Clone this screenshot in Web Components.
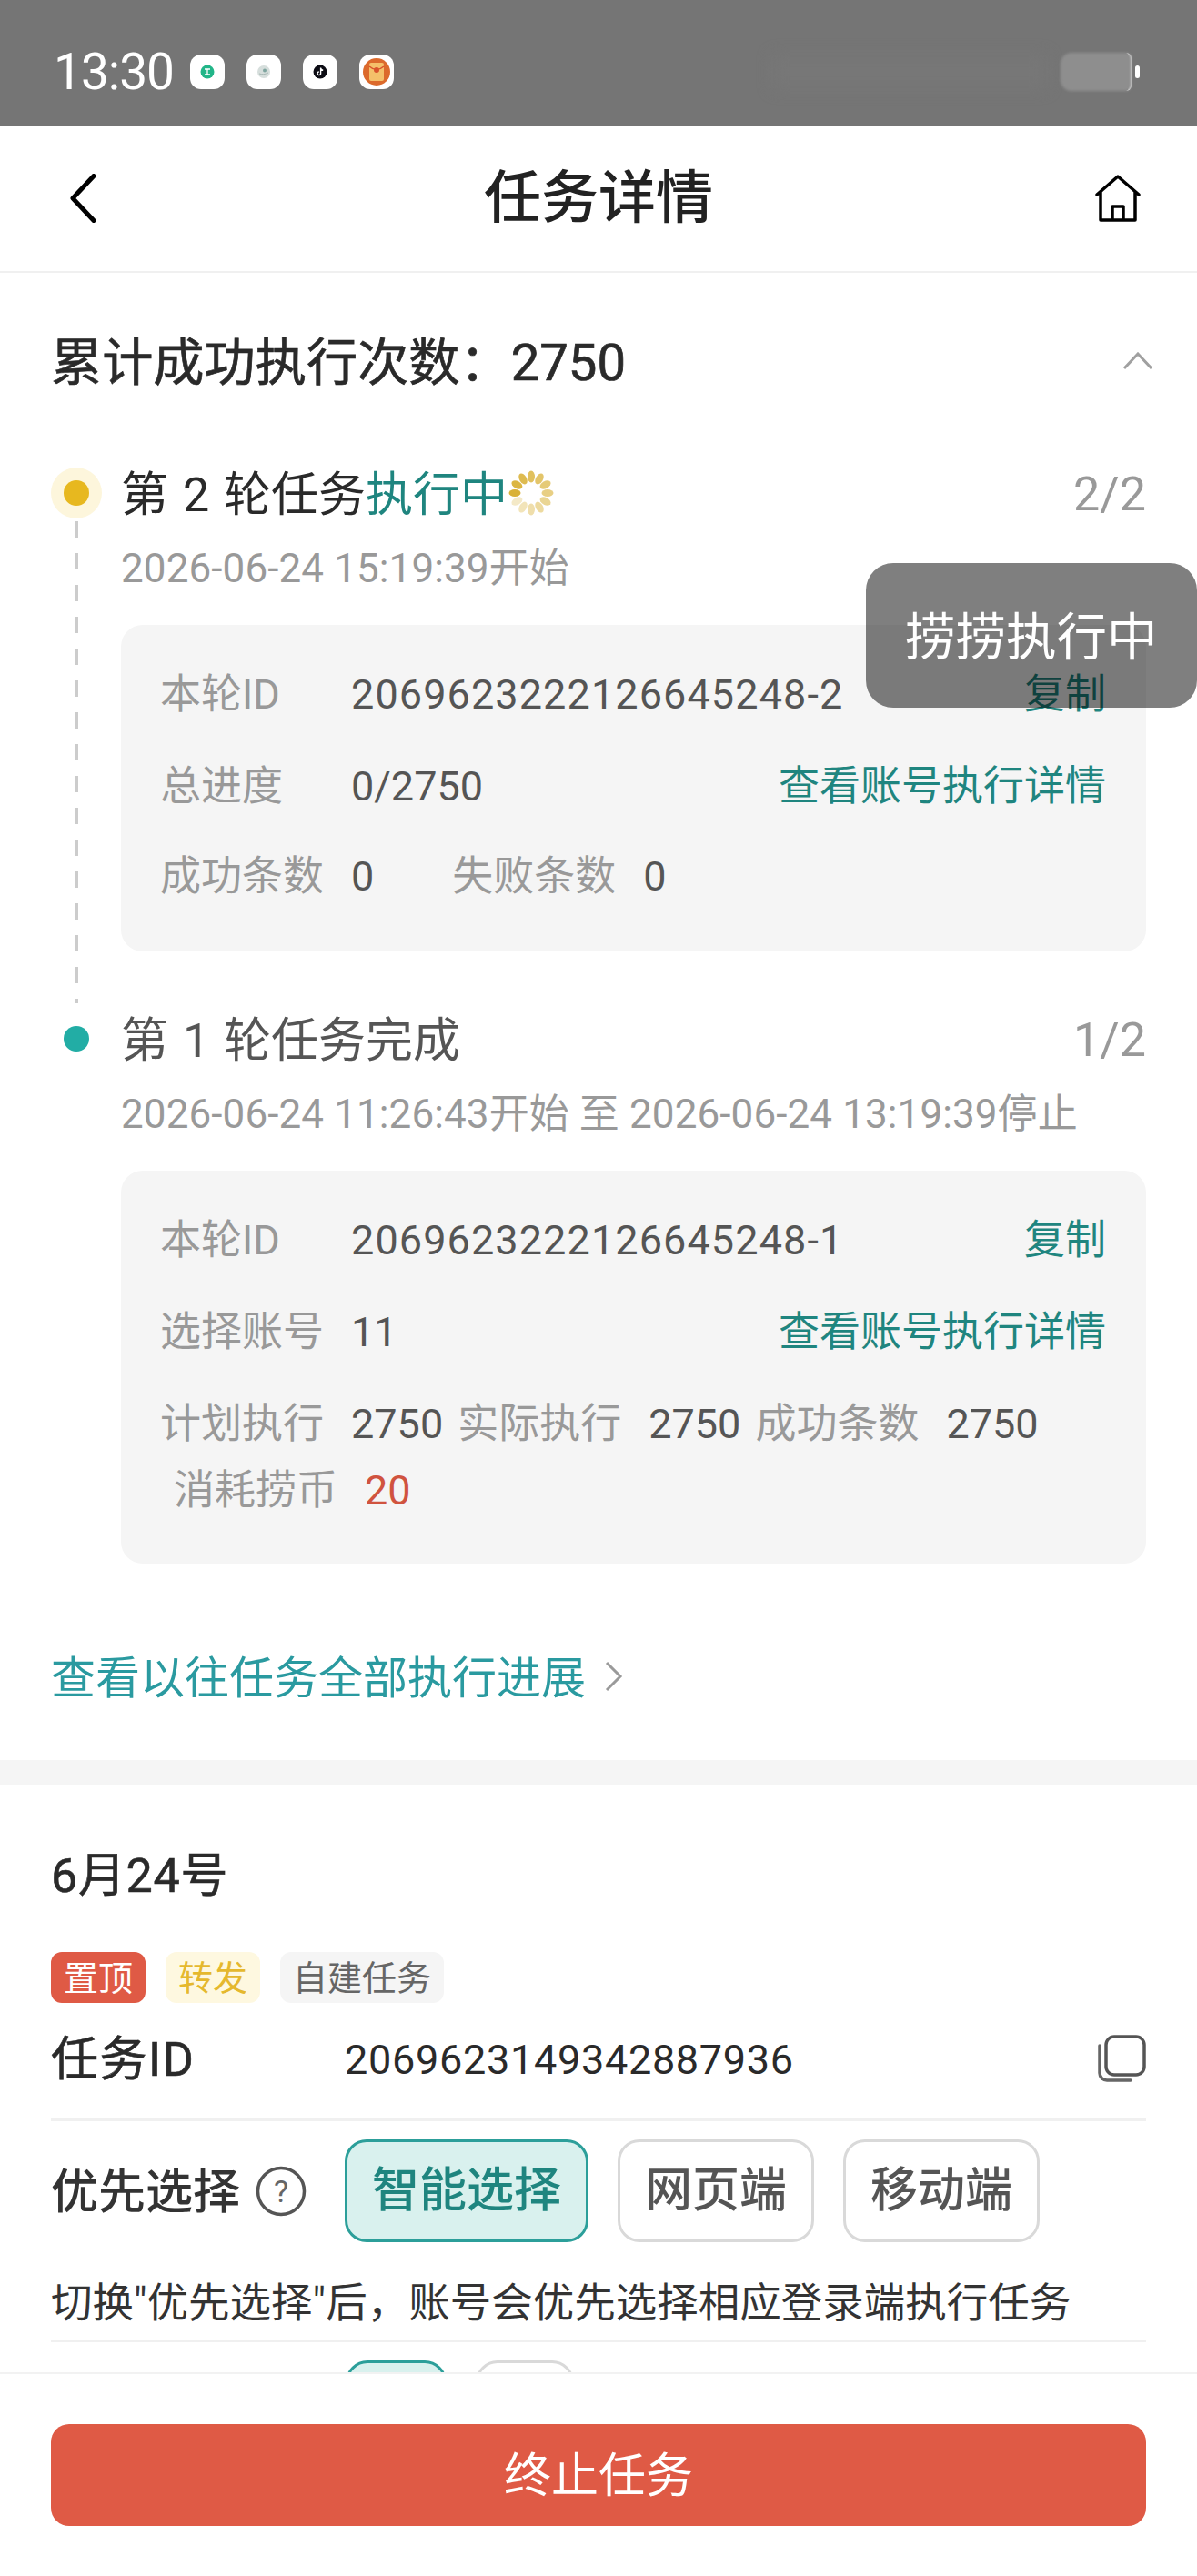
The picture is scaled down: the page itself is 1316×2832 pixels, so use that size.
<!DOCTYPE html>
<html lang="zh-CN"><head><meta charset="utf-8"><title>任务详情</title>
<style>
html,body{margin:0;padding:0;background:#fff}
body{font-family:Roboto,"Noto Sans CJK SC",sans-serif;color:#333}
</style></head><body>
<x-page>
  <x-statusbar slot="top"></x-statusbar>
  <x-navbar slot="top"></x-navbar>
  <x-progress>
    <x-round state="running" pos="2/2" date="2026-06-24 15:19:39开始">
      <span slot="title">第 2 轮任务</span>
      <x-panel>
        <x-kv label="本轮ID" value="2069623222126645248-2" link="复制" long></x-kv>
        <x-kv label="总进度" value="0/2750" link="查看账号执行详情"></x-kv>
        <x-kv style="margin:-2px 0 2px">
          <x-stat label="成功条数" value="0"></x-stat>
          <x-stat label="失败条数" value="0" style="margin-left:86px"></x-stat>
        </x-kv>
      </x-panel>
    </x-round>
    <x-round state="done" pos="1/2" date="2026-06-24 11:26:43开始 至 2026-06-24 13:19:39停止">
      <span slot="title">第 1 轮任务完成</span>
      <x-panel>
        <x-kv label="本轮ID" value="2069623222126645248-1" link="复制" long></x-kv>
        <x-kv label="选择账号" value="11" link="查看账号执行详情"></x-kv>
        <x-kv wrap>
          <x-stat label="计划执行" value="2750"></x-stat>
          <x-stat label="实际执行" value="2750"></x-stat>
          <x-stat label="成功条数" value="2750"></x-stat>
          <x-stat label="消耗捞币" value="20" tone="red" style="margin-left:15px"></x-stat>
        </x-kv>
      </x-panel>
    </x-round>
  </x-progress>
  <x-taskinfo></x-taskinfo>
  <x-footer slot="bottom"></x-footer>
  <x-toast slot="over">捞捞执行中</x-toast>
</x-page>
<script>
function def(name, html){
  customElements.define(name, class extends HTMLElement{
    constructor(){super();this.attachShadow({mode:'open'});}
    connectedCallback(){
      const a={};for(const x of this.attributes)a[x.name]=x.value;
      this.shadowRoot.innerHTML = typeof html==='function'?html(a):html;
    }
  });
}
def('x-page',`<style>
:host{display:block;position:relative;width:1316px;height:2832px;overflow:hidden;background:#fff}
.wrap{display:flex;flex-direction:column;height:100%}
.scroll{flex:1;min-height:0;overflow:hidden}
</style><div class="wrap"><slot name="top"></slot><div class="scroll"><slot></slot></div><slot name="bottom"></slot></div><slot name="over"></slot>`);

def('x-statusbar',`<style>
:host{display:flex;align-items:center;height:138px;background:#757575;color:#fff;box-sizing:border-box;padding:20px 63px 0 59px;position:relative}
.t{font:400 55px/1 Roboto,sans-serif;width:150px;letter-spacing:-1px}
.i{display:flex;gap:24px}
.b{width:38px;height:38px;border-radius:12px;background:#fff;display:flex;align-items:center;justify-content:center}
.sp{flex:1;display:flex;justify-content:flex-end;align-items:center}
.sig{width:300px;height:36px;background:#777;filter:blur(8px);margin-right:16px}
.bat{display:flex;align-items:center}
.fill{width:78px;height:42px;border-radius:12px 6px 6px 12px;background:#8e8e8e;filter:blur(1.5px)}
.arc{width:6px;height:42px;border-right:3px solid #fff;border-radius:0 10px 10px 0;box-sizing:border-box;margin-left:-6px}
.nub{width:5px;height:14px;background:#fff;border-radius:3px;margin-left:4px}
</style>
<div class="t">13:30</div>
<div class="i">
<div class="b"><svg width="16" height="16" viewBox="0 0 16 16"><circle cx="8" cy="8" r="7.5" fill="#22b588"/><path d="M5 5h6M8 5v6M5 11h6" stroke="#fff" stroke-width="1.3" fill="none"/></svg></div>
<div class="b"><svg width="16" height="16" viewBox="0 0 16 16"><circle cx="8" cy="8" r="7" fill="#d6dedc"/><circle cx="9" cy="6.5" r="2" fill="#7fa5a0"/><path d="M3 10c3 1 6 1 10-1" stroke="#a9b9b6" fill="none"/></svg></div>
<div class="b"><svg width="16" height="16" viewBox="0 0 16 16"><circle cx="8" cy="8" r="7.5" fill="#0c0c14"/><path d="M8.6 3.6v6.2a1.8 1.8 0 1 1-1.8-1.8M8.6 3.8c.3 1.4 1.2 2.2 2.6 2.4" stroke="#fff" stroke-width="1.4" fill="none"/></svg></div>
<div class="b"><svg width="30" height="30" viewBox="0 0 30 30"><circle cx="15" cy="15" r="15" fill="#dc6a2c"/><rect x="7" y="5" width="16" height="20" rx="2" fill="#f4c06a"/><path d="M7 9q8 7 16 0" stroke="#d9532c" stroke-width="1.5" fill="none"/><circle cx="15" cy="13" r="3" fill="#d9532c"/></svg></div>
</div>
<div class="sp"><div class="sig"></div><div class="bat"><div class="fill"></div><div class="arc"></div><div class="nub"></div></div></div>`);

def('x-navbar',`<style>
:host{display:grid;grid-template-columns:1fr auto 1fr;align-items:center;height:162px;box-sizing:border-box;padding:0 62px;border-bottom:2px solid #f0f0f0;background:#fff}
.b{margin-left:15px;display:block}
h1{margin:0;font:500 63px/1.2 Roboto,"Noto Sans CJK SC",sans-serif;color:#222}
.h{justify-self:end;display:block}
</style>
<svg class="b" width="28" height="54" viewBox="0 0 28 54"><path d="M26 2.500 3 27l23 24.500" fill="none" stroke="#000" stroke-width="5" stroke-linecap="round" stroke-linejoin="round"/></svg>
<h1>任务详情</h1>
<svg class="h" width="50" height="52" viewBox="0 0 50 52"><path d="M2 22 25 2l23 20M6 19v31h38V19M19 50V35h12v15" fill="none" stroke="#000" stroke-width="3.500" stroke-linejoin="round" stroke-linecap="round"/></svg>`);

def('x-progress',`<style>
:host{display:block;padding:57px 56px 57px 56px;background:#fff}
.h{display:flex;align-items:center;justify-content:space-between;height:80px;margin-bottom:70px}
.h span{font:400 56.200px/76px Roboto,"Noto Sans CJK SC",sans-serif;-webkit-text-stroke:.7px #2a2a2a;padding-top:4px;color:#2a2a2a}
svg{margin-right:-8px}
.more{display:flex;align-items:center;height:70px;margin-top:89px;color:#2a9aa0;font:400 49px/64px Roboto,"Noto Sans CJK SC",sans-serif;gap:20px}
.more span{padding-top:6px}
</style>
<div class="h"><span>累计成功执行次数：2750</span><svg width="34" height="20" viewBox="0 0 34 20"><path d="M2 18 17 2l15 16" fill="none" stroke="#a0a0a0" stroke-width="3"/></svg></div>
<slot></slot>
<div class="more"><span>查看以往任务全部执行进展</span><svg width="22" height="34" viewBox="0 0 22 34" style="margin:0"><path d="M3 2l15 15L3 32" fill="none" stroke="#9a9a9a" stroke-width="3"/></svg></div>`);

def('x-round',a=>{
  const run=a.state==='running';
  let petals='';
  if(run){for(let i=0;i<12;i++){const op=1-i*0.065;petals+=`<ellipse cx="25" cy="7" rx="4" ry="6.500" fill="#d9b136" opacity="${op.toFixed(2)}" transform="rotate(${-90+i*30} 25 25)"/>`;}}
  return `<style>
:host{display:grid;grid-template-columns:77px 1fr}
.rail{display:flex;flex-direction:column;align-items:center;width:56px}
.halo{width:56px;height:56px;border-radius:50%;background:${run?'#fdf6dc':'transparent'};display:flex;align-items:center;justify-content:center;margin-top:7px;flex:none}
.dot{width:28px;height:28px;border-radius:50%;background:${run?'#e7b81f':'#22ada5'}}
.dash{flex:1;width:3px;margin:3px 0 4px;background:repeating-linear-gradient(#ccc 0 18px,transparent 18px 35px)}
.body{padding-bottom:${run?61:0}px;min-width:0}
.t{display:flex;align-items:center;box-sizing:border-box;height:70px;padding-top:6px;font:400 52px/64px Roboto,"Noto Sans CJK SC",sans-serif;word-spacing:3px;color:${run?'#2a2a2a':'#555'}}
.st{color:#1f857f}
.p{margin:-3px 0 0 auto;color:#999}
.spin{margin:-6px 0 0 1px;display:block}
.d{margin-top:16px;box-sizing:border-box;height:60px;padding-top:4px;font:400 44px/56px Roboto,"Noto Sans CJK SC",sans-serif;letter-spacing:.1px;color:#999;white-space:nowrap}
::slotted(x-panel){margin-top:34px}
</style>
<div class="rail"><div class="halo"><div class="dot"></div></div>${run?'<div class="dash"></div>':''}</div>
<div class="body"><div class="t"><slot name="title"></slot>${run?'<span class="st">执行中</span><svg class="spin" width="50" height="50" viewBox="0 0 50 50">'+petals+'</svg>':''}<span class="p">${a.pos}</span></div>
<div class="d">${a.date}</div><slot></slot></div>`;
});

def('x-panel',`<style>
:host{display:flex;flex-direction:column;gap:41px;background:#f5f5f5;border-radius:24px;padding:44px 44px 53px 43px}
</style><slot></slot>`);

def('x-kv',a=>{
  const labeled=a.label!==undefined;
  return `<style>
:host{display:flex;align-items:center;box-sizing:border-box;min-height:60px;font:400 45px/54px Roboto,"Noto Sans CJK SC",sans-serif;${labeled?'padding-top:6px;':''}${a.wrap!==undefined?'flex-wrap:wrap;column-gap:16px;row-gap:13px;':''}}
.l{color:#999;width:210px;flex:none}
.v{color:#555;${a.long!==undefined?'letter-spacing:1.1px;':''}}
.a{margin-left:auto;color:#1f857f}
</style>${labeled?`<span class="l">${a.label}</span><span class="v">${a.value}</span><span class="a">${a.link||''}</span>`:'<slot></slot>'}`;
});

def('x-stat',a=>`<style>
:host{display:inline-flex;box-sizing:border-box;padding-top:6px;font:400 45px/54px Roboto,"Noto Sans CJK SC",sans-serif;gap:30px}
.l{color:#999}.v{color:${a.tone==='red'?'#d0533f':'#555'}}
</style><span class="l">${a.label}</span><span class="v">${a.value}</span>`);

def('x-tag',a=>`<style>
:host{display:inline-flex;align-items:center;box-sizing:border-box;height:56px;padding:2px 14px 0;border-radius:12px;font:400 38px/52px Roboto,"Noto Sans CJK SC",sans-serif;
background:${{red:'#df5a45',yellow:'#fef8e0',grey:'#f5f5f5'}[a.tone]};color:${{red:'#fff',yellow:'#e5b82e',grey:'#666'}[a.tone]}}
</style><slot></slot>`);

def('x-chip',a=>`<style>
:host{display:flex;align-items:center;justify-content:center;box-sizing:border-box;height:113px;padding:0 27px;border-radius:24px;border:3px solid ${a.on!==undefined?'#2c9f9a':'#d9d9d9'};background:${a.on!==undefined?'#d9f1ee':'#fff'};color:${a.on!==undefined?'#1f857f':'#555'};font:500 52px/1 Roboto,"Noto Sans CJK SC",sans-serif}
</style><slot></slot>`);

def('x-taskinfo',`<style>
:host{display:block;border-top:27px solid #f5f5f5;padding:63px 56px 0 56px;background:#fff}
.d{font:400 52px/64px Roboto,"Noto Sans CJK SC",sans-serif;-webkit-text-stroke:.6px #2a2a2a;letter-spacing:.7px;padding-top:6px;color:#2a2a2a;height:64px}
.tags{display:flex;gap:22px;margin-top:51px}
.id{display:flex;align-items:center;height:70px;margin-top:26px;font:400 52px/60px Roboto,"Noto Sans CJK SC",sans-serif;color:#2a2a2a}
.id span{padding-top:4px}
.id .k{width:323px;letter-spacing:1.500px;-webkit-text-stroke:.6px #2a2a2a}
.id .v{font-size:45px;letter-spacing:.7px}
.id svg{margin-left:auto}
hr{border:0;height:3px;background:#f0f0f0;margin:0}
.pri{display:flex;align-items:center;margin-top:20px}
.pri .k{font:500 52px/60px Roboto,"Noto Sans CJK SC",sans-serif;padding-top:4px;color:#333;width:225px}
.q{margin-right:42px}
.chips{display:flex;gap:32px}
.note{height:53px;padding-top:7px;margin-top:34px;margin-bottom:13px;font:400 45.500px/53px Roboto,"Noto Sans CJK SC",sans-serif;color:#333;white-space:nowrap}
.next{display:flex;gap:32px;margin:20px 0 0 324px}
</style>
<div class="d">6月24号</div>
<div class="tags"><x-tag tone="red">置顶</x-tag><x-tag tone="yellow">转发</x-tag><x-tag tone="grey">自建任务</x-tag></div>
<div class="id" style="padding-bottom:31px;box-sizing:content-box"><span class="k">任务ID</span><span class="v">2069623149342887936</span>
<svg width="54" height="52" viewBox="0 0 54 52"><path d="M9 12v30a8 8 0 0 0 8 8h26" fill="none" stroke="#666" stroke-width="3.500" stroke-linecap="round" transform="translate(-6 0)"/><rect x="10" y="2" width="42" height="42" rx="9" fill="none" stroke="#555" stroke-width="3.500"/></svg></div>
<hr>
<div class="pri"><span class="k">优先选择</span>
<svg class="q" width="56" height="56" viewBox="0 0 56 56"><circle cx="28" cy="28" r="25.500" fill="none" stroke="#555" stroke-width="3.500"/><text x="28" y="40" text-anchor="middle" font-family="Roboto,sans-serif" font-size="34" fill="#666">?</text></svg>
<div class="chips"><x-chip on>智能选择</x-chip><x-chip>网页端</x-chip><x-chip>移动端</x-chip></div></div>
<div class="note">切换"优先选择"后，账号会优先选择相应登录端执行任务</div>
<hr>
<div class="next"><x-chip on style="width:111px;padding:0"></x-chip><x-chip style="width:108px;padding:0"></x-chip></div>`);

def('x-footer',`<style>
:host{display:block;height:224px;box-sizing:border-box;background:#fff;border-top:2px solid #f2f2f2;padding:55px 56px 0 56px;flex:none;position:relative}
button{display:block;width:100%;height:112px;border:0;border-radius:20px;padding:4px 0 0;background:#df5a45;color:#fff;font:400 52px/1 Roboto,"Noto Sans CJK SC",sans-serif}
</style><button>终止任务</button>`);

def('x-toast',`<style>
:host{position:absolute;left:952px;top:619px;width:364px;height:159px;box-sizing:border-box;padding:50px 0 0 43px;border-radius:30px;background:rgba(0,0,0,.5);color:#fff;font:400 55.500px/1.2 Roboto,"Noto Sans CJK SC",sans-serif}
</style><slot></slot>`);
</script>
</body></html>
